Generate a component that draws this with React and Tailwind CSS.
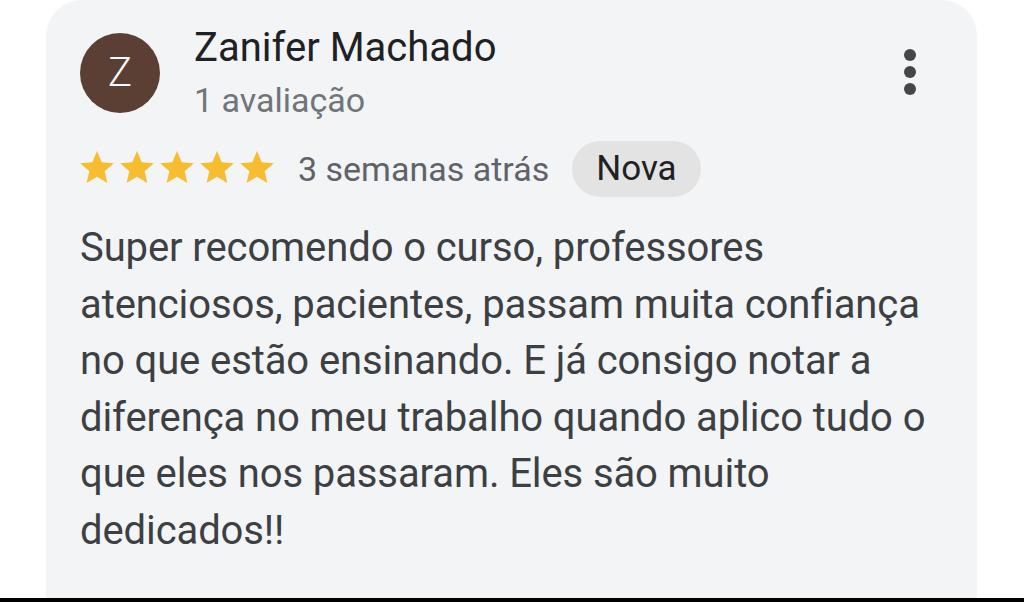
export default function App() {
  const Star = () => (
    <svg width="34" height="32" viewBox="2 2 20 19" className="block">
      <path fill="#f6bd31" d="M12 17.27L18.18 21l-1.64-7.03L22 9.24l-7.19-.61L12 2 9.19 8.63 2 9.24l5.46 4.73L5.82 21z" />
    </svg>
  );
  return (
    <div className="w-[1024px] h-[602px] bg-white flex flex-col overflow-hidden" style={{ fontFamily: "Roboto, 'Noto Sans', sans-serif" }}>
      <div className="ml-[46px] w-[931px] flex-1 rounded-t-[36px] bg-[#f3f4f6] pl-[34px] pr-[40px] pt-[32px]">
        <div className="flex items-start">
          <div className="w-[80px] h-[80px] mt-[1px] rounded-full bg-[#5b3f35] flex items-center justify-center text-white text-[40px] font-light leading-none">Z</div>
          <div className="ml-[34px] flex-1 -mt-[4px]">
            <div className="text-[40px] leading-[40px] text-[#202124]">Zanifer Machado</div>
            <div className="text-[34px] leading-[40px] text-[#70757a] mt-[12px]">1 avaliação</div>
          </div>
          <div className="flex flex-col items-center gap-[5px] mt-[17px] mr-[21px]">
            <span className="w-[12px] h-[12px] rounded-full bg-[#444746]" />
            <span className="w-[12px] h-[12px] rounded-full bg-[#444746]" />
            <span className="w-[12px] h-[12px] rounded-full bg-[#444746]" />
          </div>
        </div>
        <div className="flex items-center mt-[21px]">
          <div className="flex gap-[6px] mb-[4px]">
            <Star /><Star /><Star /><Star /><Star />
          </div>
          <span className="ml-[24px] text-[34px] leading-none text-[#5f6368]">3 semanas atrás</span>
          <span className="ml-[23px] h-[56px] px-[24px] rounded-full bg-[#e3e3e4] flex items-center text-[35px] text-[#202124]">Nova</span>
        </div>
        <p className="mt-[23px] text-[40px] leading-[56.6px] text-[#3c4043] tracking-[-0.1px] w-[850px]">
          Super recomendo o curso, professores atenciosos, pacientes, passam muita confiança no que estão ensinando. E já consigo notar a diferença no meu trabalho quando aplico tudo o que eles nos passaram. Eles são muito dedicados!!
        </p>
      </div>
      <div className="h-[4px] bg-black" />
    </div>
  );
}
